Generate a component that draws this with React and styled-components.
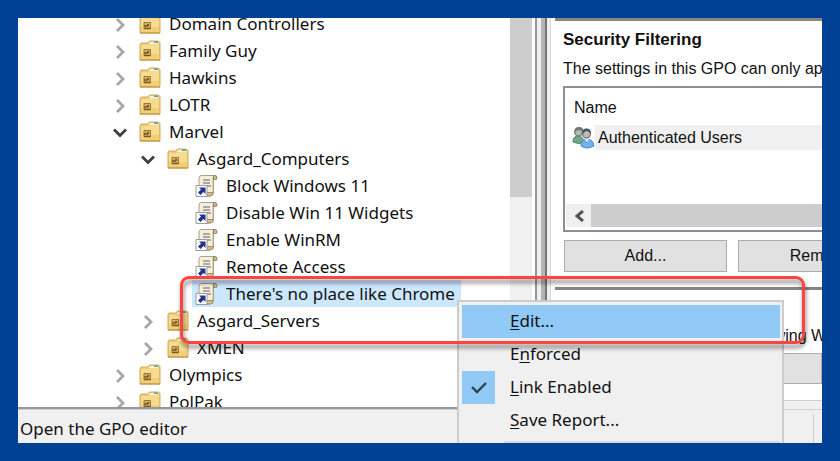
import React, { useState } from 'react';
import styled, { createGlobalStyle } from 'styled-components';

const GlobalStyle = createGlobalStyle`
  * {
    box-sizing: border-box;
  }

  body {
    margin: 0;
    background: #004193;
    color: #111;
    font-family: "Noto Sans", "Open Sans", sans-serif;
    font-size: 17px;
  }

  button, select {
    font: inherit;
    color: inherit;
  }
`;

const Page = styled.div`
  height: 100vh;
  padding: 18px;
`;

const Window = styled.main`
  position: relative;
  display: flex;
  flex-direction: column;
  height: 100%;
  overflow: hidden;
  background: #f0f0f0;
`;

const Panes = styled.div`
  display: flex;
  flex: 1;
  min-height: 0;
`;

const TreePane = styled.section`
  display: flex;
  flex: 514 1 0;
  min-width: 0;
  padding-right: 3px;
  overflow: hidden;
  background: #fff;
  border-bottom: 2px solid #93969b;
`;

const Tree = styled.ul`
  flex: 1;
  min-width: 0;
  margin: -8px 0 0;
  padding: 0 0 0 92px;
  list-style: none;
`;

const TreeRow = styled.li`
  display: flex;
  align-items: center;
  height: 27px;
  padding-left: ${(p) => p.$depth * 28}px;
`;

const Expander = styled.button`
  display: flex;
  align-items: center;
  justify-content: center;
  width: 20px;
  height: 27px;
  margin: 2px 6px 0 0;
  padding: 0;
  background: none;
  border: 0;
`;

const ExpanderGap = styled.span`
  width: 26px;
`;

const Node = styled.span`
  display: flex;
  align-items: center;
  gap: 8px;
  height: 27px;
  padding: 0 6px 0 3px;
  white-space: nowrap;
  background: ${(p) => (p.$selected ? '#cce8ff' : 'transparent')};
`;

const VScroll = styled.div`
  width: 22px;
  background: #f0f0f0;
`;

const VThumb = styled.div`
  height: 46%;
  background: #cdcdcd;
`;

const Splitter = styled.div`
  width: 16px;
  background: #f0f0f0;
  border-left: 2px solid #93969b;
  border-right: 1px solid #d9d9d9;

  &::before {
    content: '';
    display: block;
    width: 4px;
    height: 100%;
    margin-left: 4px;
    background: #b4b4b4;
    border-right: 2px solid #757575;
  }
`;

const Details = styled.section`
  flex: 267 1 0;
  min-width: 0;
  margin-bottom: 8px;
  padding-left: 4px;
  overflow: hidden;
  background: #fff;
  border-bottom: 1px solid #ccc;
  font-family: "Liberation Sans", Arial, sans-serif;
  font-size: 16px;
  line-height: 20px;
  white-space: nowrap;
`;

const Group = styled.section`
  height: ${(p) => p.$height};
  padding: 9px 0 0 8px;
  border-top: 3px solid #858585;
`;

const Title = styled.h2`
  margin: 0;
  font-size: 17px;
  line-height: 20px;
`;

const Text = styled.p`
  margin: 9px 0 7px;
`;

const ListBox = styled.div`
  display: flex;
  flex-direction: column;
  justify-content: space-between;
  height: 146px;
  padding: 7px 0 3px 1px;
  border: 2px solid #8b8f97;
  border-right: 0;
`;

const Table = styled.table`
  width: 100%;
  border-collapse: collapse;

  th {
    height: 30px;
    padding: 0 0 5px 8px;
    font-weight: normal;
    text-align: left;
  }

  td {
    height: 25px;
    padding: 0 0 0 3px;
    background: #f0f0f0;
  }

  td:first-child {
    width: 29px;
    padding: 0 0 0 6px;
    background: #fff;
  }

  svg {
    display: block;
  }
`;

const HScroll = styled.div`
  display: flex;
  height: 23px;
  background: #cdcdcd;
`;

const ScrollBtn = styled.button`
  display: flex;
  align-items: center;
  justify-content: center;
  width: 25px;
  padding: 0;
  background: #f0f0f0;
  border: 0;
`;

const Actions = styled.div`
  display: flex;
  gap: 11px;
  margin: 8px 0 0 1px;
`;

const Btn = styled.button`
  flex: 0 0 163px;
  height: 32px;
  padding: 0;
  background: #e1e1e1;
  border: 1px solid #adadad;
`;

const Filter = styled.label`
  display: block;
  margin-top: 7px;
`;

const Select = styled.select`
  display: block;
  width: 100%;
  height: 31px;
  margin-top: 7px;
  background: #e1e1e1;
  border: 1px solid #adadad;
  border-radius: 0;
  appearance: none;
`;

const StatusBar = styled.footer`
  display: flex;
  align-items: center;
  justify-content: space-between;
  height: 34px;
  padding: 4px 8px 0 2px;
  border-top: 1px solid #d0d0d0;
`;

const Grip = styled.span`
  height: 29px;
  border-left: 1px solid #ccc;
`;

const Menu = styled.div`
  position: absolute;
  top: 282px;
  left: 439px;
  width: 327px;
  padding: 3px 2px 3px 3px;
  background: #f0f0f0;
  border: 2px solid #ccc;
`;

const MenuItem = styled.button`
  display: flex;
  align-items: center;
  gap: 15px;
  width: 100%;
  height: 33px;
  padding: 0;
  text-align: left;
  background: ${(p) => (p.$active ? '#91c9f7' : 'transparent')};
  border: 0;

  u {
    text-decoration-thickness: 1px;
    text-underline-offset: 2px;
  }
`;

const MenuLabel = styled.span`
  padding-bottom: 2px;
`;

const Tick = styled.span`
  display: flex;
  align-items: center;
  justify-content: center;
  width: 33px;
  height: 33px;
  background: ${(p) => (p.$on ? '#91c9f7' : 'transparent')};
`;

const Separator = styled.hr`
  height: 2px;
  margin: 4px 0 3px 42px;
  background: #d9d9d9;
  border: 0;
`;

const Marker = styled.div`
  position: absolute;
  top: 258px;
  left: 162px;
  width: 625px;
  height: 68px;
  border: 3px solid #fd4440;
  border-radius: 9px;
  filter: drop-shadow(1px 4px 2px rgba(0, 0, 0, .5));
  pointer-events: none;
`;

const Chevron = ({ open }) => (open ? (
  <svg width="14" height="10" viewBox="0 0 14 10" fill="none" stroke="#404040" strokeWidth="2.8">
    <path d="M1 1.5 7 7.500 13 1.5" />
  </svg>
) : (
  <svg width="10" height="14" viewBox="0 0 10 14" fill="none" stroke="#a6a6a6" strokeWidth="2.8">
    <path d="M2 1 8 7 2 13" />
  </svg>
));

const FolderIcon = () => (
  <svg width="22" height="22" viewBox="0 0 22 22">
    <path d="M1 5 2 3h7l1.500-2h9l1.500 1.500V20H1z" fill="#edcb78" stroke="#d3ab54" />
    <path d="M2 5h8l2-1.500h8V19H2z" fill="#f6dc93" />
    <path d="M2 14h18v5H2z" fill="#f1ce78" />
    <path d="M11 2h8v2h-9z" fill="#fff3cb" />
    <path d="M15 1.500h4V3h-4z" fill="#4f9de0" />
    <path d="M1 20h20" stroke="#bd8d35" />
    <path d="M5 9h7v7H5z" fill="#d9b260" />
    <path d="M5 9.500h6.500v6H5z" fill="none" stroke="#9b762f" />
    <path d="M5 13h4M5 15.500h6.500" stroke="#795623" strokeWidth="1.300" />
    <path d="M8 11h2v2H8z" fill="#795623" />
  </svg>
);

const GpoLinkIcon = () => (
  <svg width="23" height="23" viewBox="0 0 23 23">
    <path d="M6 1.500h14q-1.500 1-1.500 3v14q0 3-3 3.500h-6l1-4H4V5q0-3.500 2-3.500z" fill="#f7efd8" stroke="#aaa28f" />
    <path d="M17.500 3V18" stroke="#ded2ad" />
    <path d="M18.500 1.500q3.500-.5 3.500 2t-1.500 2h-2z" fill="#c8b98e" stroke="#8c836a" />
    <path d="M8 6h7M8 9h7M11 12h5" stroke="#9290a4" strokeWidth="1.300" />
    <path d="M12 18.500h6.500q-.5 3.500-3.500 3.500h-3z" fill="#d3bf86" stroke="#9f916e" />
    <path d="M1 11.500h11v11H1z" fill="#fff" stroke="#9c9c9c" />
    <path d="M4 13.500h6.500V20l-2-2-3 3L3 18.500l3-3z" fill="#27348c" />
  </svg>
);

const UsersIcon = () => (
  <svg width="23" height="23" viewBox="0 0 23 23">
    <path d="M1 16q0-6 5-6t6 6q-5 3-11 0z" fill="#6fa983" stroke="#4f8265" />
    <circle cx="6.500" cy="6" r="4" fill="#b8b7b0" stroke="#65706d" />
    <path d="M3 6q-1-5 4-5t4 5q-2-2-4-2T3 6z" fill="#6d7875" />
    <path d="M9 20q0-7 6-7t7 7q-7 4-13 0z" fill="#72b2e8" stroke="#4b8bc4" />
    <circle cx="14.500" cy="8" r="4" fill="#c8b8a8" stroke="#566878" />
    <path d="M10.500 8q-1-5.500 4-5.500t4.500 5.500q-2-3-4-3t-4.500 3z" fill="#40566a" />
    <path d="m13 13 2 3 2-3z" fill="#e9f4fc" />
  </svg>
);

const nodes = [
  { name: 'Domain Controllers', depth: 0, type: 'ou' },
  { name: 'Family Guy', depth: 0, type: 'ou' },
  { name: 'Hawkins', depth: 0, type: 'ou' },
  { name: 'LOTR', depth: 0, type: 'ou' },
  { name: 'Marvel', depth: 0, type: 'ou', open: true },
  { name: 'Asgard_Computers', depth: 1, type: 'ou', open: true },
  { name: 'Block Windows 11', depth: 2, type: 'gpo' },
  { name: 'Disable Win 11 Widgets', depth: 2, type: 'gpo' },
  { name: 'Enable WinRM', depth: 2, type: 'gpo' },
  { name: 'Remote Access', depth: 2, type: 'gpo' },
  { name: "There's no place like Chrome", depth: 2, type: 'gpo' },
  { name: 'Asgard_Servers', depth: 1, type: 'ou' },
  { name: 'XMEN', depth: 1, type: 'ou' },
  { name: 'Olympics', depth: 0, type: 'ou' },
  { name: 'PolPak', depth: 0, type: 'ou' },
];

const TreeNode = ({ node, selected, onSelect }) => (
  <TreeRow
    role="treeitem"
    aria-level={node.depth + 1}
    aria-selected={selected}
    $depth={node.depth}
  >
    {node.type === 'ou' ? (
      <Expander aria-label={`Toggle ${node.name}`}>
        <Chevron open={node.open} />
      </Expander>
    ) : <ExpanderGap />}
    <Node $selected={selected} onClick={onSelect}>
      {node.type === 'ou' ? <FolderIcon /> : <GpoLinkIcon />}
      {node.name}
    </Node>
  </TreeRow>
);

const ContextMenu = () => {
  const [enabled, setEnabled] = useState(true);

  return (
    <Menu role="menu">
      <MenuItem role="menuitem" $active>
        <Tick />
        <MenuLabel><u>E</u>dit...</MenuLabel>
      </MenuItem>
      <MenuItem role="menuitem">
        <Tick />
        <MenuLabel>E<u>n</u>forced</MenuLabel>
      </MenuItem>
      <MenuItem
        role="menuitemcheckbox"
        aria-checked={enabled}
        onClick={() => setEnabled(!enabled)}
      >
        <Tick $on={enabled}>
          {enabled && (
            <svg width="16" height="12" viewBox="0 0 16 12" fill="none" stroke="#333f4a" strokeWidth="2.4">
              <path d="m1 5 5 5 9-9" />
            </svg>
          )}
        </Tick>
        <MenuLabel><u>L</u>ink Enabled</MenuLabel>
      </MenuItem>
      <MenuItem role="menuitem">
        <Tick />
        <MenuLabel><u>S</u>ave Report...</MenuLabel>
      </MenuItem>
      <Separator />
    </Menu>
  );
};

const App = () => {
  const [selected, setSelected] = useState("There's no place like Chrome");

  return (
    <Page>
      <GlobalStyle />
      <Window>
        <Panes>
          <TreePane>
            <Tree role="tree">
              {nodes.map((node) => (
                <TreeNode
                  key={node.name}
                  node={node}
                  selected={node.name === selected}
                  onSelect={() => setSelected(node.name)}
                />
              ))}
            </Tree>
            <VScroll><VThumb /></VScroll>
          </TreePane>
          <Splitter />
          <Details>
            <Group $height="269px">
              <Title>Security Filtering</Title>
              <Text>The settings in this GPO can only apply to the following groups, users, and computers:</Text>
              <ListBox>
                <Table>
                  <thead>
                    <tr><th colSpan="2">Name</th></tr>
                  </thead>
                  <tbody>
                    <tr>
                      <td><UsersIcon /></td>
                      <td>Authenticated Users</td>
                    </tr>
                  </tbody>
                </Table>
                <HScroll>
                  <ScrollBtn aria-label="Scroll left">
                    <svg width="10" height="12" viewBox="0 0 10 12" fill="none" stroke="#555" strokeWidth="3">
                      <path d="M9 1 3 6l6 5" />
                    </svg>
                  </ScrollBtn>
                </HScroll>
              </ListBox>
              <Actions>
                <Btn>Add...</Btn>
                <Btn>Remove</Btn>
              </Actions>
            </Group>
            <Group $height="auto">
              <Title>WMI Filtering</Title>
              <Filter>
                This GPO is linked to the following WMI filter:
                <Select>
                  <option>&lt;none&gt;</option>
                </Select>
              </Filter>
            </Group>
          </Details>
        </Panes>
        <StatusBar>
          <span>Open the GPO editor</span>
          <Grip />
        </StatusBar>
        <ContextMenu />
        <Marker />
      </Window>
    </Page>
  );
};

export default App;
